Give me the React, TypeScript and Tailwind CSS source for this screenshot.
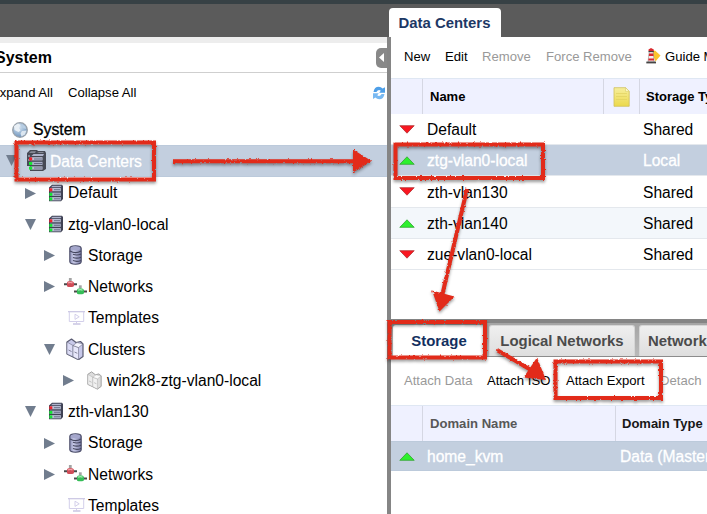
import React from "react";

type IconProps = { className?: string };

const Globe = () => (
  <svg width="18" height="18" viewBox="0 0 18 18">
    <defs>
      <radialGradient id="globe" cx="0.4" cy="0.3" r="0.8">
        <stop offset="0" stopColor="#dce9f5" />
        <stop offset="1" stopColor="#5e88b5" />
      </radialGradient>
    </defs>
    <circle cx="9" cy="9" r="7.3" fill="url(#globe)" stroke="#9aa2aa" strokeWidth="1.3" />
    <path d="M3 5 L7 2.5 L9.5 4 L8 7 L9.5 9.5 L7.5 11 L3.5 9Z" fill="#e9f0f6" />
    <path d="M11 10 L15.5 9.5 L14 13.5 L10.5 15.5 L9.5 12.5Z" fill="#dbe6f0" />
    <path d="M11 3 L14.5 5.5 L15 8 L11.5 7Z" fill="#b9cfe4" />
  </svg>
);

const Server = ({ className = "" }: IconProps) => (
  <svg width="16" height="18" viewBox="0 0 16 18" className={className}>
    <path d="M1 3.5 L4 0.8 H14 L15 2 V15 L13 17.3 H1Z" fill="#3f4254" />
    <path d="M4.5 1.8 H13.5 L12.6 3.2 H3Z" fill="#aeb3cb" />
    <rect x="2" y="4" width="10.8" height="3.3" fill="#b9bdd3" />
    <rect x="2" y="8.6" width="10.8" height="3.3" fill="#a9aec7" />
    <rect x="2" y="13.1" width="10.8" height="3.3" fill="#b9bdd3" />
    <path d="M6 5.7 H12 M6 10.3 H12 M6 14.8 H12" stroke="#6a6f88" />
    <rect x="1.3" y="4.3" width="3" height="3" fill="#f0232d" />
    <rect x="1.3" y="8.9" width="3" height="3" fill="#16e536" />
    <rect x="1.3" y="13.4" width="3" height="3" fill="#16e536" />
  </svg>
);

const Servers = () => (
  <svg width="21" height="23" viewBox="0 0 21 23">
    <path d="M1 4 L4 1 H11 L12 2 H19 L20 4 V20 L17 22 H4 V17 H1Z" fill="#474a55" />
    <path d="M3 4 L5 2.2 H10 L9 4Z M11 4 L13 3 H18 L17 4Z M2 6 H4 V8 H2Z M2 10 H4 V12 H2Z" fill="#858995" />
    <path d="M5.5 7 L7.5 5 H18 L17 7Z" fill="#aeb3cb" />
    <rect x="4.5" y="8.2" width="12" height="3.2" fill="#bcc0d5" />
    <rect x="4.5" y="12.8" width="12" height="3.2" fill="#a9aec7" />
    <rect x="4.5" y="17.4" width="12" height="3.2" fill="#bcc0d5" />
    <path d="M8 10 H16 M8 14.5 H16 M8 19 H16" stroke="#666b83" />
    <rect x="3" y="8.4" width="3.2" height="3" fill="#f0232d" />
    <rect x="3" y="13" width="3.2" height="3" fill="#16e536" />
    <rect x="3" y="17.6" width="3.2" height="3" fill="#16e536" />
  </svg>
);

const Disk = () => (
  <svg width="13" height="20" viewBox="0 0 13 20">
    <defs>
      <linearGradient id="disk">
        <stop offset="0" stopColor="#8d90b8" />
        <stop offset="0.35" stopColor="#c9cbe8" />
        <stop offset="1" stopColor="#7779a3" />
      </linearGradient>
    </defs>
    <path d="M0.8 3.4 Q0.8 0.8 6.5 0.8 T12.2 3.4 V16.5 Q12.2 19.2 6.5 19.2 T0.8 16.5Z" fill="url(#disk)" stroke="#484a66" strokeWidth="1.1" />
    <ellipse cx="6.5" cy="3.5" rx="4.7" ry="1.9" fill="#a4a6cb" />
    <path d="M1 6 Q6.5 9.3 12 6 M4 9.2 Q8 10.8 12 9 M4 12.4 Q8 14 12 12.2 M4 15.6 Q8 17.2 12 15.4" fill="none" stroke="#44465f" strokeWidth="1.1" />
  </svg>
);

const Plug = ({ color, light }: { color: string; light: string }) => (
  <g>
    <path d="M0 6.2 H3 M9.5 6.2 H13" stroke="#4a4a4a" strokeWidth="2" />
    <path d="M6.3 0 V3" stroke="#a3a3a3" strokeWidth="2.8" />
    <path d="M3 5 Q3 3 6.3 3 T10 5 V7.5 Q10 9 6.3 9 T3 7.5Z" fill={color} />
    <path d="M4 5 Q6.3 3.6 8.6 5" stroke={light} fill="none" strokeWidth="1.2" />
  </g>
);

const Network = () => (
  <svg width="23" height="17" viewBox="0 0 23 17">
    <Plug color="#cf4c57" light="#f0a4aa" />
    <g transform="translate(10 7.3)">
      <Plug color="#35bd57" light="#a5eab5" />
    </g>
  </svg>
);

const Template = () => (
  <svg width="17" height="14" viewBox="0 0 17 14" fill="none" stroke="#d3cfea">
    <path d="M0 0.7 H17" strokeWidth="1.2" stroke="#c9c5e2" />
    <path d="M1.3 1 V10.5 H15.7 V1 M7 3.2 L11.2 5.8 L7 8.4Z M8.5 10.5 V12.5" />
    <path d="M5 13 H12.5" strokeWidth="1.5" stroke="#c9c5e2" />
  </svg>
);

const Cluster = ({ muted = false, size = 18 }: { muted?: boolean; size?: number }) => {
  const line = muted ? "#a2a2a2" : "#5b5c72";
  return (
    <svg width={size} height={size * 1.25} viewBox="0 0 18 22.5" stroke={line} strokeWidth="1.2" strokeLinejoin="round">
      <path d="M1 4 L5.5 1 L10 4.5 L14.5 3.5 L17 6 V18.5 L12.5 21.7 L1 16Z" fill={muted ? "#dcdcdc" : "#c8c9ea"} />
      <path d="M1 4 L7 7.5 V18.8 L1 16Z" fill={muted ? "#ededed" : "#dcdcf6"} strokeWidth="0.5" />
      <path d="M7 7.5 L12.5 9.5 V21.7 L7 18.8Z" fill={muted ? "#f2f2f2" : "#e7e7fb"} strokeWidth="0.5" />
      <path d="M7 7.5 L11 4.5 L17 6 L12.5 9.5Z" fill={muted ? "#fafafa" : "#f4f4ff"} strokeWidth="0.5" />
      <path d="M2.5 12 L5.5 13.5 M8.5 14 L11.3 15.3" strokeWidth="0.7" />
    </svg>
  );
};

const Refresh = () => (
  <svg width="14" height="14" viewBox="0 0 14 14">
    <path d="M1.5 6 Q2.3 0.8 6.8 0.7 Q9 0.7 10.6 2.4 L13 1.2 V6.8 H7.2 L8.8 4.7 Q6.3 2.9 4.4 6Z" fill="#4e9fe8" />
    <path d="M12.5 8 Q11.7 13.2 7.2 13.3 Q5 13.3 3.4 11.6 L1 13 V7.2 H6.8 L5.2 9.3 Q7.7 11.1 9.6 8Z" fill="#79b9f2" />
  </svg>
);

const Lighthouse = () => (
  <svg width="15" height="16" viewBox="0 0 15 16">
    <path d="M5.5 3.5 L9 2.5 L14.5 7.5 L9.5 13.5Z" fill="#fbc52d" />
    <path d="M3.3 3 H7 L8.2 14 H2Z" fill="#f5efef" stroke="#777" strokeWidth="0.5" />
    <path d="M2.5 1.5 L5 0 L7.8 1.5 V3 H2.5Z M3 5.5 H7.3 L7.5 8 H2.8Z M2.5 10.5 H7.9 L8 12.5 H2.3Z" fill="#d9292e" />
    <path d="M2.5 3.6 H7.8" stroke="#333" />
    <path d="M0.3 14.5 H10" stroke="#454545" strokeWidth="1.8" />
  </svg>
);

const Note = () => (
  <svg width="17" height="20" viewBox="0 0 17 20">
    <defs>
      <linearGradient id="note" x2="0" y2="1">
        <stop offset="0" stopColor="#f6ee9c" />
        <stop offset="1" stopColor="#ecd94b" />
      </linearGradient>
    </defs>
    <path d="M1 0.7 H12.5 L16.2 4.3 V19.3 H1Z" fill="url(#note)" stroke="#cfc05a" strokeWidth="0.8" />
    <path d="M12.5 0.7 V4.3 H16.2Z" fill="#fffbd2" stroke="#d1c45f" strokeWidth="0.5" />
    <path d="M3 6.5 H14 M3 9.5 H14 M3 12.5 H14" stroke="#e0d162" strokeWidth="0.7" />
  </svg>
);

const Expander = ({ open }: { open?: boolean }) => (
  <svg width="11" height="11" viewBox="0 0 11 11">
    <path d={open ? "M0 0 H11 L5.5 11Z" : "M0 0 L11 5.5 L0 11Z"} fill="#717d8e" />
  </svg>
);

const Status = ({ up }: { up?: boolean }) => (
  <svg width="16" height="9" viewBox="0 0 16 9">
    {up ? (
      <path d="M0.8 8.3 L8 0.8 L15.2 8.3Z" fill="#2df02d" stroke="#33a333" strokeWidth="0.8" />
    ) : (
      <path d="M0.8 0.7 L8 8.2 L15.2 0.7Z" fill="#fa1721" stroke="#b13232" strokeWidth="0.8" />
    )}
  </svg>
);

type TreeItem = {
  label: string;
  open?: boolean;
  leaf?: boolean;
  icon: React.ReactNode;
  indent: string;
  iconBox: string;
};

const tree: TreeItem[] = [
  { label: "Default", icon: <Server />, indent: "pl-[25px]", iconBox: "w-[32px] pl-[12px]" },
  { label: "ztg-vlan0-local", open: true, icon: <Server />, indent: "pl-[25px]", iconBox: "w-[32px] pl-[12px]" },
  { label: "Storage", icon: <Disk />, indent: "pl-[44px]", iconBox: "w-[33px] pl-[14px]" },
  { label: "Networks", icon: <Network />, indent: "pl-[44px]", iconBox: "w-[33px] pl-[9px]" },
  { label: "Templates", leaf: true, icon: <Template />, indent: "pl-[44px]", iconBox: "w-[33px] pl-[13px]" },
  { label: "Clusters", open: true, icon: <Cluster />, indent: "pl-[44px]", iconBox: "w-[33px] pl-[11px]" },
  { label: "win2k8-ztg-vlan0-local", icon: <Cluster muted size={15} />, indent: "pl-[63px]", iconBox: "w-[33px] pl-[13px]" },
  { label: "zth-vlan130", open: true, icon: <Server />, indent: "pl-[25px]", iconBox: "w-[32px] pl-[12px]" },
  { label: "Storage", icon: <Disk />, indent: "pl-[44px]", iconBox: "w-[33px] pl-[14px]" },
  { label: "Networks", icon: <Network />, indent: "pl-[44px]", iconBox: "w-[33px] pl-[9px]" },
  { label: "Templates", leaf: true, icon: <Template />, indent: "pl-[44px]", iconBox: "w-[33px] pl-[13px]" },
];

const centers = [
  { name: "Default", type: "Shared", up: false, row: "bg-white" },
  { name: "ztg-vlan0-local", type: "Local", up: true, row: "bg-[#c3cfdf] text-white [-webkit-text-stroke:0.3px_white]" },
  { name: "zth-vlan130", type: "Shared", up: false, row: "bg-white" },
  { name: "zth-vlan140", type: "Shared", up: true, row: "bg-[#f3f7fb]" },
  { name: "zue-vlan0-local", type: "Shared", up: false, row: "bg-white" },
];

function SystemTree() {
  return (
    <aside className="flex w-[387px] shrink-0 flex-col overflow-hidden bg-white">
      <div className="h-[6px] shrink-0 bg-[#ededed]" />
      <div className="flex h-[30px] shrink-0 items-center justify-between border-b border-[#cfcfcf]">
        <h1 className="-ml-[5px] text-[16px] font-bold">System</h1>
        <button className="flex h-[20px] w-[11px] items-center justify-center rounded-l-[5px] bg-[#888]">
          <svg width="5" height="9" viewBox="0 0 5 9"><path d="M5 0 V9 L0 4.5Z" fill="#fff" /></svg>
        </button>
      </div>
      <div className="flex h-[41px] shrink-0 items-center pr-[4px] pb-px text-[13.1px]">
        <span className="-ml-[9px] w-[77px]">Expand All</span>
        <span className="grow">Collapse All</span>
        <span className="-mr-[3px]"><Refresh /></span>
      </div>
      <div className="flex h-[31.25px] shrink-0 items-center gap-[4px] pl-[11px] text-[15.8px] [-webkit-text-stroke:0.3px_black]">
        <Globe />
        <span className="pt-px">System</span>
      </div>
      <div className="flex h-[31.25px] shrink-0 items-center border-y border-[#bccadb] bg-[#c3cfdf] pl-[6px] text-[15.6px] text-white [-webkit-text-stroke:0.3px_white]">
        <Expander open />
        <span className="flex w-[33px] pl-[9px]"><Servers /></span>
        <span className="pt-px">Data Centers</span>
      </div>
      {tree.map((item, i) => (
        <div key={i} className={"flex h-[31.25px] shrink-0 items-center text-[15.6px] " + item.indent}>
          <span className="w-[11px] pt-[2px]">{!item.leaf && <Expander open={item.open} />}</span>
          <span className={"flex shrink-0 pt-px " + item.iconBox}>{item.icon}</span>
          <span className="pt-[2px] whitespace-nowrap">{item.label}</span>
        </div>
      ))}
    </aside>
  );
}

function CentersPanel() {
  return (
    <section className="flex h-[281px] shrink-0 flex-col bg-white">
      <div className="flex h-[40px] shrink-0 items-center pb-[2px] pl-[13px] text-[13.1px] whitespace-nowrap text-[#999]">
        <span className="w-[41px] shrink-0 text-black">New</span>
        <span className="w-[37px] shrink-0 text-black">Edit</span>
        <span className="w-[64px] shrink-0">Remove</span>
        <span className="w-[100px] shrink-0">Force Remove</span>
        <span className="w-[19px] shrink-0 pb-[3px]"><Lighthouse /></span>
        <span className="text-black">Guide Me</span>
      </div>
      <div className="flex h-[36px] shrink-0 border-t border-[#dfe7f3] bg-[#eff1ff] text-[13px] font-bold whitespace-nowrap">
        <span className="w-[32px] shrink-0 border-r border-[#d5d7e3]" />
        <span className="flex w-[181px] shrink-0 items-center border-r border-[#d5d7e3] pl-[7px]">Name</span>
        <span className="flex w-[36px] shrink-0 items-center justify-center border-r border-[#d5d7e3] pt-px"><Note /></span>
        <span className="flex items-center pl-[6px]">Storage Type</span>
      </div>
      {centers.map((c) => (
        <div key={c.name} className={"flex h-[31.2px] shrink-0 items-center border-b border-[#e4e8ed] pl-[8px] text-[15.6px] " + c.row}>
          <span className="w-[28px] pt-px">
            <Status up={c.up} />
          </span>
          <span className="w-[216px] pt-[2px]">{c.name}</span>
          <span className="pt-[2px]">{c.type}</span>
        </div>
      ))}
    </section>
  );
}

function DetailPanel() {
  return (
    <section className="flex grow flex-col bg-white">
      <div className="flex h-[38px] shrink-0 items-end gap-[4px] border-b border-[#8c8c8c] border-t-[4px] border-t-[#858585] bg-gradient-to-b from-[#a5a5a5] to-[#bababa] pl-[2px] text-[14.9px] font-bold whitespace-nowrap text-[#4b4b4b]">
        <span className="-mb-px flex h-[32px] w-[92px] shrink-0 items-center justify-center rounded-t-[3px] bg-white text-[#132f60]">Storage</span>
        <span className="flex h-[31px] w-[146px] shrink-0 items-center justify-center rounded-t-[3px] border border-b-0 border-[#d6d6d6] bg-gradient-to-b from-[#efefef] to-[#dedede] pt-px">Logical Networks</span>
        <span className="flex h-[31px] w-[170px] shrink-0 items-center rounded-tl-[3px] border border-b-0 border-[#d6d6d6] bg-gradient-to-b from-[#efefef] to-[#dedede] pt-px pl-[8px]">Network Clusters</span>
      </div>
      <div className="flex h-[48px] shrink-0 items-center pl-[13px] text-[13.1px] whitespace-nowrap text-[#999]">
        <span className="w-[83px] shrink-0">Attach Data</span>
        <span className="w-[79px] shrink-0 text-black">Attach ISO</span>
        <span className="w-[94px] shrink-0 text-black">Attach Export</span>
        <span>Detach</span>
      </div>
      <div className="flex h-[36px] shrink-0 border-t border-[#dfe7f3] bg-[#eff1ff] text-[13.1px] font-bold whitespace-nowrap text-[#585858]">
        <span className="w-[32px] shrink-0 border-r border-[#d5d7e3]" />
        <span className="flex w-[193px] shrink-0 items-center border-r border-[#d5d7e3] pl-[7px]">Domain Name</span>
        <span className="flex items-center pl-[6px] text-[13px] text-[#171717]">Domain Type</span>
      </div>
      <div className="flex h-[30px] shrink-0 items-center border-y border-[#bccadb] bg-[#c3cfdf] pl-[8px] text-[15.6px] text-white [-webkit-text-stroke:0.3px_white]">
        <span className="w-[28px] shrink-0"><Status up /></span>
        <span className="w-[193px] shrink-0 pt-px">home_kvm</span>
        <span className="pt-px whitespace-nowrap">Data (Master)</span>
      </div>
    </section>
  );
}

/* Hand-drawn red callouts laid over the panels. */
function Annotations() {
  return (
    <svg className="pointer-events-none absolute inset-0" width="707" height="514" viewBox="0 0 707 514">
      <defs>
        <filter id="chalk" filterUnits="userSpaceOnUse" x="0" y="0" width="707" height="514" colorInterpolationFilters="sRGB">
          <feTurbulence type="fractalNoise" baseFrequency="0.45" numOctaves="2" seed="4" result="n" />
          <feDisplacementMap in="SourceGraphic" in2="n" scale="2.6" xChannelSelector="R" yChannelSelector="G" result="d" />
          <feDropShadow in="d" dx="0" dy="2" stdDeviation="1.5" floodColor="#000" floodOpacity="0.4" />
        </filter>
      </defs>
      <g filter="url(#chalk)" fill="none" stroke="#e22b1a" strokeWidth="4">
        <rect x="16.5" y="142.5" width="137.5" height="37" />
        <rect x="395.5" y="144.5" width="147.5" height="33.5" />
        <rect x="389.5" y="322" width="95.5" height="35.5" />
        <rect x="555.5" y="361.5" width="105.5" height="36.5" />
        <path d="M173 161.2 H354 M467 189 L442 296 M497 350 L531 370" />
        <g fill="#e22b1a" stroke="none">
          <path d="M353 149.5 L371.5 161 L353 172.5Z" />
          <path d="M432 290.5 L454.5 296.5 L439.5 311.5Z" />
          <path d="M537 357.5 L546 380 L523.5 377.5Z" />
        </g>
      </g>
    </svg>
  );
}

export default function App() {
  return (
    <div className="relative flex h-[514px] w-[707px] flex-col overflow-hidden bg-white font-['Liberation_Sans',Arial,sans-serif] leading-none text-black">
      <header className="flex h-[37px] shrink-0 flex-col border-t-[4px] border-[#374145] bg-[#5b5b5b]">
        <div className="mt-[4px] ml-[389px] flex h-[30px] w-[112px] shrink-0 items-center justify-center rounded-t-[4px] bg-white pr-px text-[14.9px] font-bold text-[#1d3865]">Data Centers</div>
      </header>
      <div className="flex min-h-0 grow">
        <SystemTree />
        <div className="w-[4px] shrink-0 bg-[#858585]" />
        <main className="mt-px flex min-w-0 grow flex-col overflow-hidden">
          <CentersPanel />
          <DetailPanel />
        </main>
      </div>
      <Annotations />
    </div>
  );
}
